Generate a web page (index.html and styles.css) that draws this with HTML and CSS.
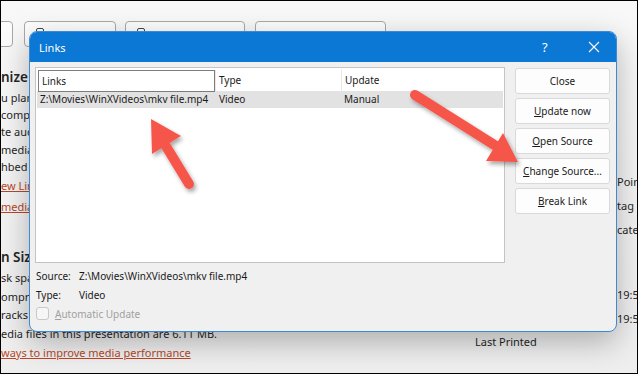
FILE: index.html
```html
<!DOCTYPE html>
<html>
  <head>
    <meta charset="UTF-8" />
    <meta name="viewport" content="width=device-width, initial-scale=1.0" />
    <title>Links</title>
    <link rel="stylesheet" href="styles.css">
  </head>
  <body>
    <div class="frame">
      <div class="toolbar">
        <div class="tool tool-a"></div>
        <div class="tool tool-b"><span class="glyph"></span></div>
        <div class="tool tool-c"><span class="glyph"></span></div>
        <div class="tool tool-d">
          <svg width="12" height="10" viewBox="0 0 12 10"><path d="M0.5 1.5h4l1.5 1.5h5.5v6.5h-11z" fill="none" stroke="#444" stroke-width="1"/></svg>
        </div>
      </div>

      <div class="info">
        <div class="info-left">
          <h2>nize Media Compatibility</h2>
          <div class="lines">
            <p>u plan to play your media on other devices,</p>
            <p>compatibility may be improved by</p>
            <p>te audio and video files.</p>
            <p>media files in this presentation are</p>
            <p>hbed or linked.</p>
          </div>
          <div class="links">
            <a href="#">ew Linked Files</a>
            <a href="#">media Files</a>
          </div>
          <h2 class="second">n Size and Performance</h2>
          <div class="lines lines-b">
            <p>sk space and improve playback</p>
            <p>ompress your media files.</p>
            <p>racks may be affected.</p>
            <p>edia files in this presentation are 6.11 MB.</p>
          </div>
          <a class="perf" href="#">ways to improve media performance</a>
        </div>
        <div class="info-right">
          <div class="props">
            <span>Template</span><span>Points</span>
            <span>Tags</span><span>tag</span>
            <span>Categories</span><span>cate</span>
          </div>
          <div class="props dates">
            <span>Created</span><span>19:5</span>
            <span>Modified</span><span>19:5</span>
            <span>Last Printed</span><span></span>
          </div>
        </div>
      </div>

      <div class="dialog">
        <div class="titlebar">
          <span class="title">Links</span>
          <span class="help">?</span>
          <svg class="close-x" width="12" height="12" viewBox="0 0 12 12"><path d="M1 1L11 11M11 1L1 11" stroke="#fff" stroke-width="1.1"/></svg>
        </div>
        <div class="dialog-body">
          <div class="main">
            <div class="list">
              <div class="list-head">
                <div class="col col-links">Links</div>
                <div class="col">Type</div>
                <div class="col">Update</div>
              </div>
              <div class="list-row">
                <div class="col">Z:\Movies\WinXVideos\mkv file.mp4</div>
                <div class="col">Video</div>
                <div class="col">Manual</div>
              </div>
            </div>
            <div class="buttons">
              <button>Close</button>
              <button><u>U</u>pdate now</button>
              <button><u>O</u>pen Source</button>
              <button><u>C</u>hange Source...</button>
              <button><u>B</u>reak Link</button>
            </div>
          </div>
          <div class="details">
            <div class="detail"><span class="label">Source:</span><span>Z:\Movies\WinXVideos\mkv file.mp4</span></div>
            <div class="detail"><span class="label">Type:</span><span>Video</span></div>
            <label class="auto"><span class="box"></span><span><u>A</u>utomatic Update</span></label>
          </div>
        </div>
      </div>

      <svg class="arrows" width="636" height="372" viewBox="0 0 636 372">
        <defs>
          <filter id="shadow" x="-20%" y="-20%" width="140%" height="140%">
            <feDropShadow dx="2" dy="3" stdDeviation="2" flood-color="#000" flood-opacity="0.35"/>
          </filter>
        </defs>
        <g filter="url(#shadow)" fill="#f5564a" stroke="#f5564a">
          <line x1="188" y1="183" x2="160" y2="137" stroke-width="10" stroke-linecap="round"/>
          <polygon points="150,118 180,135 151,153" stroke="none"/>
          <line x1="414" y1="94" x2="495" y2="145" stroke-width="10" stroke-linecap="round"/>
          <polygon points="517,161 502,132 485,160" stroke="none"/>
        </g>
      </svg>
    </div>
  </body>
</html>
```

FILE: styles.css
```css
* {
  box-sizing: border-box;
  margin: 0;
  padding: 0;
}

body {
  background-color: #000;
  font-family: "Noto Sans", sans-serif;
}

.frame {
  position: relative;
  width: 638px;
  height: 374px;
  border: 1px solid #000;
  overflow: hidden;
  background: linear-gradient(#f8f8f8, #eeeeee);
  color: #262626;
}

/* background window */
.toolbar {
  display: flex;
  padding-top: 20px;
}

.tool {
  height: 26px;
  border: 1px solid #a8a8a8;
  border-radius: 4px;
  background-color: #fcfcfc;
  padding: 6px 0 0 11px;
}

.tool-a {
  width: 21px;
  margin-left: -9px;
}

.tool-b {
  width: 92px;
  margin-left: 11px;
}

.tool-c {
  width: 120px;
  margin-left: 9px;
}

.tool-d {
  width: 131px;
  margin-left: 10px;
  padding-left: 8px;
}

.glyph {
  display: block;
  width: 8px;
  height: 8px;
  border: 1px solid #444;
  border-radius: 2px;
}

.info {
  display: flex;
  margin-top: 19px;
}

.info-left {
  width: 474px;
  flex-shrink: 0;
  font-size: 11px;
  white-space: nowrap;
}

.info-left h2 {
  font-size: 13.5px;
  line-height: 22px;
  font-weight: 600;
}

.info-left p {
  line-height: 17.2px;
}

.lines {
  padding-top: 1px;
}

.links a,
.perf {
  display: block;
  line-height: 21px;
  color: #b7472a;
  text-decoration: underline;
}

.info-left h2.second {
  margin-top: 29px;
}

.lines-b {
  padding-top: 1px;
}

.lines-b p {
  line-height: 18.5px;
}

.perf {
  line-height: 19px;
}

.info-right {
  padding-top: 103px;
  font-size: 11px;
  white-space: nowrap;
}

.props {
  display: grid;
  grid-template-columns: 142px auto;
  grid-auto-rows: 24px;
  align-items: center;
}

.dates {
  margin-top: 42px;
  grid-auto-rows: 23.5px;
}

/* dialog */
.dialog {
  position: absolute;
  left: 28px;
  top: 30px;
  width: 588px;
  height: 301px;
  border: 1px solid #3a8ad6;
  border-radius: 8px;
  background-color: #f0f0f0;
  box-shadow: 0 10px 30px rgba(0, 0, 0, 0.28);
  overflow: hidden;
  font-size: 10px;
  color: #1a1a1a;
  white-space: nowrap;
}

.titlebar {
  display: flex;
  align-items: center;
  height: 30px;
  background-color: #0a78d4;
  color: #fff;
  padding-left: 9px;
}

.title {
  flex: 1;
  font-size: 11px;
}

.help {
  width: 12px;
  font-size: 13px;
  margin-right: 34px;
}

.close-x {
  margin-right: 16px;
}

.dialog-body {
  padding: 5px 6px 0 5px;
}

.main {
  display: flex;
  gap: 10px;
}

.list {
  width: 470px;
  height: 196px;
  border: 1px solid #c4c4c4;
  background-color: #fff;
  padding: 2px 0 0 1px;
}

.list-head,
.list-row {
  display: grid;
  grid-template-columns: 178px 126px 1fr;
}

.list-head {
  height: 21px;
}

.list-head .col {
  line-height: 20px;
  padding-left: 3px;
  border-left: 1px solid #e8e8e8;
}

.list-head .col-links {
  border: 1px solid #7d7d7d;
  margin-left: 1px;
}

.list-row {
  height: 17px;
  background-color: #e2e2e2;
  line-height: 17px;
  margin-right: 1px;
}

.list-row .col {
  padding-left: 3px;
}

.list-row .col:nth-child(2) {
  padding-left: 4px;
}

.buttons {
  display: flex;
  flex-direction: column;
  gap: 4px;
  padding-top: 1px;
}

button {
  width: 95px;
  height: 26px;
  border: 1px solid #d9d9d9;
  border-radius: 3px;
  background-color: #fdfdfd;
  font-family: inherit;
  font-size: 10px;
  color: #1a1a1a;
  white-space: nowrap;
}

.details {
  padding: 3px 0 0 1px;
}

.detail {
  display: flex;
  height: 19px;
  align-items: center;
}

.detail .label {
  width: 43px;
}

.auto {
  display: flex;
  align-items: center;
  gap: 6px;
  height: 19px;
  color: #a0a0a0;
}

.box {
  width: 13px;
  height: 13px;
  border: 1px solid #c8c8c8;
  border-radius: 3px;
  background-color: #f6f6f6;
}

.arrows {
  position: absolute;
  left: 0;
  top: 0;
}
```
